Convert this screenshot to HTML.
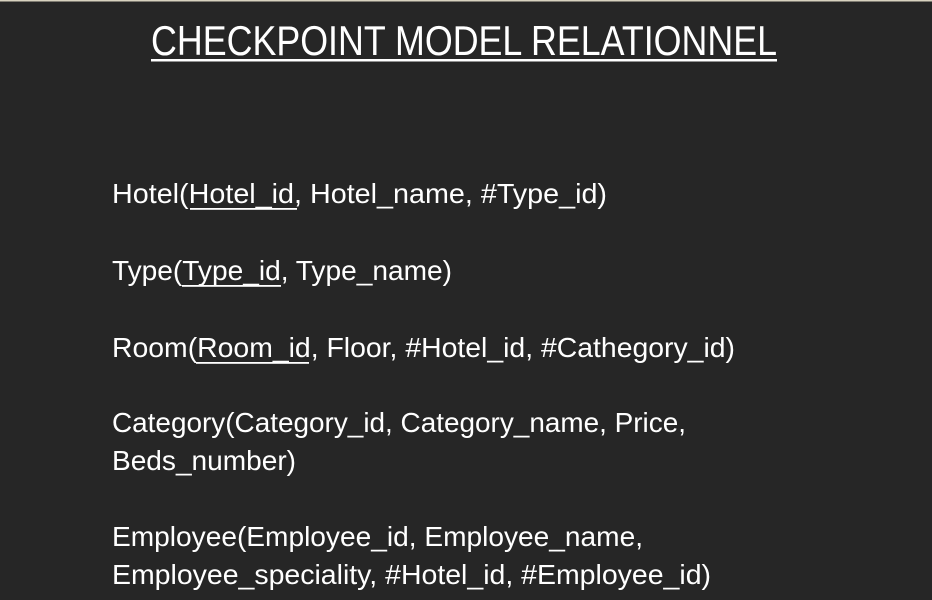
<!DOCTYPE html>
<html><head><meta charset="utf-8"><style>
html,body{margin:0;padding:0;background:#262626;width:932px;height:600px;overflow:hidden}
svg{display:block}
text{font-family:"Liberation Sans",sans-serif;fill:#fff}
</style></head><body>
<svg width="932" height="600" viewBox="0 0 932 600">
<rect x="0" y="0" width="932" height="600" fill="#262626"/>
<rect x="0" y="0" width="932" height="1.5" fill="#d8d2bf"/>
<text x="151" y="55" font-size="42" textLength="626" lengthAdjust="spacingAndGlyphs">CHECKPOINT MODEL RELATIONNEL</text>
<rect x="151" y="59" width="626" height="2.5" fill="#fff"/>
<g font-size="28">
<text x="112" y="203" textLength="495" lengthAdjust="spacingAndGlyphs">Hotel(Hotel_id, Hotel_name, #Type_id)</text>
<text x="112" y="280" textLength="340" lengthAdjust="spacingAndGlyphs">Type(Type_id, Type_name)</text>
<text x="112" y="357" textLength="623" lengthAdjust="spacingAndGlyphs">Room(Room_id, Floor, #Hotel_id, #Cathegory_id)</text>
<text x="112" y="432" textLength="574" lengthAdjust="spacingAndGlyphs">Category(Category_id, Category_name, Price,</text>
<text x="112" y="470" textLength="184" lengthAdjust="spacingAndGlyphs">Beds_number)</text>
<text x="112" y="546" textLength="531" lengthAdjust="spacingAndGlyphs">Employee(Employee_id, Employee_name,</text>
<text x="112" y="584" textLength="599" lengthAdjust="spacingAndGlyphs">Employee_speciality, #Hotel_id, #Employee_id)</text>
</g>
<rect x="190" y="208" width="107" height="1.8" fill="#fff"/>
<rect x="182" y="285" width="99" height="1.8" fill="#fff"/>
<rect x="196" y="362" width="113" height="1.8" fill="#fff"/>
</svg>
</body></html>
